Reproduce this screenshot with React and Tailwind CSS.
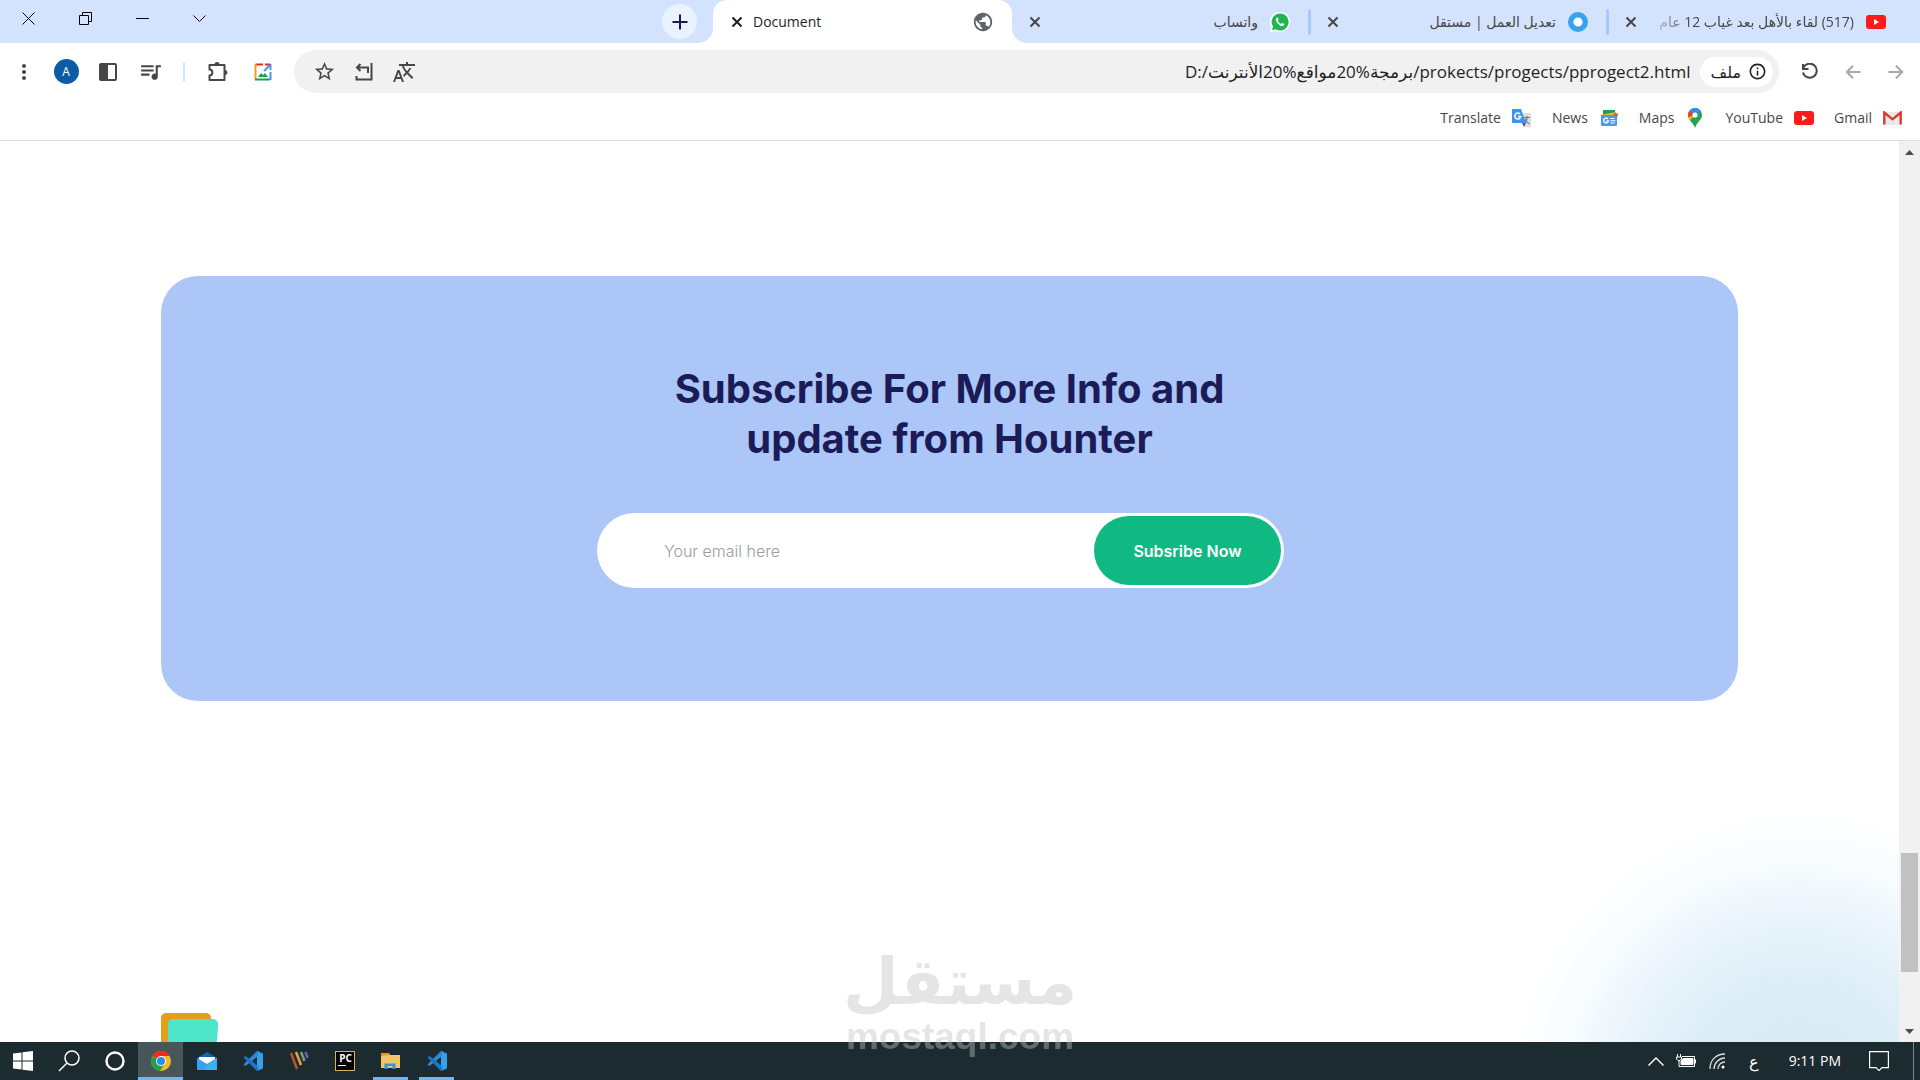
import React from 'react';
import { MdQueueMusic, MdStarOutline, MdTranslate, MdPublic, MdInfoOutline } from 'react-icons/md';

/* ---------- icons ---------- */

const CloseIcon = () => (
    <svg width="12" height="12" viewBox="0 0 12 12" stroke="currentColor" strokeWidth="2">
        <path d="M1.5 1.5l9 9M10.5 1.5l-9 9" />
    </svg>
);

const YoutubeIcon = () => (
    <svg width="20" height="14" viewBox="0 0 20 14">
        <rect width="20" height="14" rx="3" fill="#ff1a1a" />
        <path d="M8 4l5 3-5 3z" fill="#fff" />
    </svg>
);

const WhatsappIcon = () => (
    <svg width="20" height="20" viewBox="0 0 20 20">
        <path d="M10 0a10 10 0 1 1-4.600 18.900L0 20l1.200-5A10 10 0 0 1 10 0z" fill="#fff" />
        <path d="M10 1.500a8.500 8.500 0 1 1-4.300 15.800L2 18.200l1-3.600A8.500 8.500 0 0 1 10 1.500z" fill="#20b551" />
        <path d="M7 5.500c-1.700 1-1.500 3.300.7 5.900 2.300 2.500 4.800 3.500 6.300 1.800.4-.6.300-1.100-.2-1.400l-1.500-.8c-.5-.2-.9.900-1.500.8-1-.3-2.500-1.800-2.800-2.800-.1-.5.800-.9.600-1.500L7.900 5.800c-.2-.4-.5-.5-.9-.3z" fill="#fff" />
    </svg>
);

const RingIcon = () => (
    <svg width="20" height="20" viewBox="0 0 20 20">
        <circle cx="10" cy="10" r="7.300" fill="#fff" stroke="#36a3f0" strokeWidth="5.400" />
    </svg>
);

const PuzzleIcon = () => (
    <svg width="22" height="22" viewBox="0 0 22 22" fill="none" stroke="#474747" strokeWidth="2" strokeLinejoin="round">
        <path d="M2.500 4h15v15h-15v-4.500c3.800 0 3.800-6 0-6z" />
        <path d="M7.500 3.500a2.500 2.500 0 0 1 5 0zM18 9a2.500 2.500 0 0 1 0 5z" fill="#474747" stroke="none" />
    </svg>
);

const LensIcon = () => (
    <svg width="18" height="18" viewBox="0 0 18 18" fill="none" strokeWidth="2">
        <path d="M9 1.500H1.500" stroke="#ea2a1f" />
        <path d="M1.500 1v15" stroke="#f0a11a" />
        <path d="M1 16.500h15" stroke="#17a34a" />
        <path d="M16.500 17V9" stroke="#4a90f5" />
        <path d="M10 8l6-6" stroke="#4a90f5" />
        <path d="M11 1.500h5" stroke="#ea2a1f" />
        <path d="M16.500 1v6" stroke="#4a90f5" />
        <path d="M4 14l3-4 2 2 2-2 3 4z" fill="#17a34a" />
    </svg>
);

const InstallIcon = () => (
    <svg width="18" height="18" viewBox="0 0 18 18" fill="none" stroke="#474747" strokeWidth="2">
        <path d="M16.500 0v16.500h-15V13" />
        <path d="M13 10V4.500H2M5.500 1L2 4.500 5.500 8" />
    </svg>
);

const ReloadIcon = () => (
    <svg width="18" height="18" viewBox="0 0 18 18" fill="none" stroke="#474747" strokeWidth="2">
        <path d="M2.500 4.500A7 7 0 1 1 2 9.500" />
        <path d="M2 1v5h5.500" />
    </svg>
);

const ArrowIcon = ({ back }) => (
    <svg width="16" height="14" viewBox="0 0 16 14" fill="none" stroke="#a8a8a8" strokeWidth="2">
        {back ? <path d="M15.500 7H2M8 .8L1.800 7 8 13.200" /> : <path d="M.5 7H14M8 .8L14.200 7 8 13.200" />}
    </svg>
);

const GmailIcon = () => (
    <svg width="19" height="14" viewBox="0 0 19 14">
        <path d="M1 1h17v13H1z" fill="#e9e9e9" />
        <path d="M1.300 13.500V1.500l8.200 6.800 8.200-6.800v12" fill="none" stroke="#dc3b2c" strokeWidth="2.400" />
    </svg>
);

const MapsIcon = () => (
    <svg width="20" height="20" viewBox="0 0 20 20">
        <path d="M10 0a7 7 0 0 1 7 7c0 5-5 6.500-7 13-1.500-5-7-8-7-13a7 7 0 0 1 7-7z" fill="#22a454" />
        <path d="M3 7a7 7 0 0 1 1.700-4.500L10 7l-5.300 5.500C3.800 11 3 9 3 7z" fill="#f9bb0e" />
        <path d="M4.500 2.700A7 7 0 0 0 3 7c0 .8.200 1.600.500 2.300L10 7z" fill="#e8402f" />
        <path d="M4.500 2.700A7 7 0 0 1 16 3.500L10 7z" fill="#3b86f0" />
        <circle cx="10" cy="7" r="2.600" fill="#fff" />
    </svg>
);

const NewsIcon = () => (
    <svg width="20" height="18" viewBox="0 0 20 18">
        <path d="M4 1h12v5H4z" fill="#1fa053" />
        <path d="M1 6l16-3 2 4H2z" fill="#f6b21a" />
        <path d="M15 4l4 1-1 4h-3z" fill="#e5482d" />
        <rect x="2" y="6" width="16" height="11" rx="1" fill="#4a9af0" />
        <path d="M9 10a2.400 2.400 0 1 0 .4 2H7.500" fill="none" stroke="#fff" strokeWidth="1.300" />
        <path d="M11.500 9.500h4M11.500 11.800h5M11.500 14h4" stroke="#fff" strokeWidth="1" />
    </svg>
);

const TranslateIcon = () => (
    <svg width="20" height="20" viewBox="0 0 20 20">
        <path d="M8 5h11v14h-7z" fill="#dedede" />
        <path d="M12 9.500h6M15 8v1.500c0 3-1.500 5-3 6M13 11c1 2.500 2.500 4 4.500 5" fill="none" stroke="#6c7a83" strokeWidth="1.200" />
        <path d="M0 1h9l5 14H1a1 1 0 0 1-1-1z" fill="#3e95ef" />
        <path d="M10 15h4l-2 4z" fill="#2a62c0" />
        <path d="M8 6a3 3 0 1 0 .8 2.400H6" fill="none" stroke="#fff" strokeWidth="1.500" />
    </svg>
);

const ChromeIcon = () => (
    <svg width="20" height="20" viewBox="0 0 20 20">
        <circle cx="10" cy="10" r="10" fill="#f6b926" />
        <path d="M10 10L1.340 5A10 10 0 0 0 9 20l5-8z" fill="#20a14c" />
        <path d="M10 10L1.340 5A10 10 0 0 1 18.660 5H10z" fill="#ee2b22" />
        <circle cx="10" cy="10" r="5" fill="#fff" />
        <circle cx="10" cy="10" r="4" fill="#2d8be8" />
    </svg>
);

const MailIcon = () => (
    <svg width="20" height="20" viewBox="0 0 20 20">
        <path d="M0 7l10-6 10 6v2H0z" fill="#1162b0" />
        <path d="M2 6h16v8H2z" fill="#fff" />
        <path d="M0 7l10 6 10-6v12H0z" fill="#36a2ee" />
        <path d="M10 13l10-6v12H8z" fill="#3fb0e8" />
    </svg>
);

const CodeIcon = () => (
    <svg width="20" height="20" viewBox="0 0 20 20">
        <path d="M14 0l6 2.500v15L14 20z" fill="#36a0ea" />
        <path d="M14.500 5.500L2.500 15 .5 13.500 14 0h1.500z" fill="#2b8bd8" />
        <path d="M14.500 14.500L2.500 5 .5 6.500 14 20h1.500z" fill="#1d78c4" />
    </svg>
);

const StrokesIcon = () => (
    <svg width="20" height="20" viewBox="0 0 20 20" fill="none" strokeWidth="2.600">
        <path d="M2 2l6 16" stroke="#b4552d" />
        <path d="M7 1l5 13" stroke="#e5a03c" />
        <path d="M12 1l3.500 9" stroke="#6f9c95" />
        <path d="M16.500 1l2 6" stroke="#5a67a8" />
    </svg>
);

const PycharmIcon = () => (
    <span className="flex h-5 w-5 flex-col border border-[#d9b25a] bg-black pl-[2px] font-['Open_Sans',sans-serif] text-[10px] leading-[13px] font-bold text-white">
        PC
        <span className="h-px w-2 bg-white" />
    </span>
);

const FolderIcon = () => (
    <svg width="19" height="18" viewBox="0 0 19 18">
        <path d="M0 1h8l2 3H0z" fill="#e59a1c" />
        <path d="M0 4l9-1h10v13H0z" fill="#f0c766" />
        <path d="M3.500 17v-5.500h11V17h-3v-3h-5v3z" fill="#3496e0" />
    </svg>
);

const WindowsIcon = () => (
    <svg width="20" height="20" viewBox="0 0 20 20" fill="#fff">
        <path d="M0 2.600L8.500 1.400V9.500H0zM9.500 1.200L20 0v9.500H9.500zM0 10.500h8.500v8.100L0 17.400zM9.500 10.500H20V20L9.500 18.800z" />
    </svg>
);

const SearchIcon = () => (
    <svg width="22" height="22" viewBox="0 0 22 22" fill="none" stroke="#fff" strokeWidth="1.500">
        <circle cx="14" cy="8" r="7" />
        <path d="M9 13l-8 8" />
    </svg>
);

const CortanaIcon = () => (
    <svg width="20" height="20" viewBox="0 0 20 20">
        <circle cx="10" cy="10" r="8.500" fill="none" stroke="#fff" strokeWidth="2.400" />
    </svg>
);

/* ---------- browser chrome ---------- */

const tabs = [
    { title: 'واتساب', icon: <WhatsappIcon /> },
    { title: 'تعديل العمل | مستقل', icon: <RingIcon />, divider: true },
    { title: '(517) لقاء بالأهل بعد غياب 12 عام', icon: <YoutubeIcon />, divider: true, fade: true },
];

const windowButtons = [
    { label: 'Close', path: 'M.5 .5l12 12M12.500 .5l-12 12' },
    { label: 'Restore', path: 'M.5 3.500h9v9h-9zM3.500 3V.5h9v9H10' },
    { label: 'Minimize', path: 'M0 6.500h13' },
    { label: 'Search tabs', path: 'M.5 3.500l6 6 6-6' },
];

const TabStrip = () => (
    <div className="flex h-[43px] shrink-0 bg-[#d3e2fd]">
        {windowButtons.map(b => (
            <button key={b.label} aria-label={b.label} className="flex h-[37px] w-[57px] items-center justify-center">
                <svg width="13" height="13" viewBox="0 0 13 13" fill="none" stroke="#000"><path d={b.path} /></svg>
            </button>
        ))}
        <button aria-label="New tab" className="mt-1 mr-4 ml-auto flex h-[35px] w-[35px] items-center justify-center rounded-full bg-[#e9f2fd]">
            <svg width="16" height="16" viewBox="0 0 16 16" stroke="#1b1b50" strokeWidth="2"><path d="M8 .5v15M.5 8h15" /></svg>
        </button>

        <div className="relative flex w-[299px] items-center rounded-t-[14px] bg-white pr-[18px] pl-[18px] text-[#1f1f1f]">
            <svg className="absolute bottom-0 -left-[15px]" width="15" height="15" viewBox="0 0 15 15"><path d="M15 0A15 15 0 0 1 0 15h15z" fill="#fff" /></svg>
            <svg className="absolute -right-[15px] bottom-0" width="15" height="15" viewBox="0 0 15 15"><path d="M0 0a15 15 0 0 0 15 15H0z" fill="#fff" /></svg>
            <button aria-label="Close tab"><CloseIcon /></button>
            <span className="ml-[10px] flex-1 text-sm">Document</span>
            <MdPublic size={22} color="#5f6368" />
        </div>

        {tabs.map(tab => (
            <div key={tab.title} className="relative flex w-[298px] items-center gap-3 pr-5 pl-[17px] text-[#474747]">
                {tab.divider && <span className="absolute top-[9px] -left-[2px] h-[26px] w-[3px] rounded-full bg-[#a8c7fa]" />}
                <button aria-label="Close tab"><CloseIcon /></button>
                <span
                    dir="rtl"
                    className={tab.fade
                        ? 'min-w-0 flex-1 overflow-hidden text-sm whitespace-nowrap [mask-image:linear-gradient(to_right,transparent,black_40px)]'
                        : 'min-w-0 flex-1 overflow-hidden text-sm whitespace-nowrap'}
                >
                    {tab.title}
                </span>
                {tab.icon}
            </div>
        ))}
        <div className="w-[14px]" />
    </div>
);

const IconButton = ({ label, children }) => (
    <button aria-label={label} className="flex h-9 w-9 shrink-0 items-center justify-center">{children}</button>
);

const Toolbar = () => (
    <div className="flex h-[57px] shrink-0 items-center bg-white pr-[6px] pl-[6px]">
        <div className="flex gap-[6px]">
            <IconButton label="Menu">
                <svg width="4" height="16" viewBox="0 0 4 16" fill="#474747"><circle cx="2" cy="2" r="2" /><circle cx="2" cy="8" r="2" /><circle cx="2" cy="14" r="2" /></svg>
            </IconButton>
            <IconButton label="Profile">
                <span className="flex h-[25px] w-[25px] items-center justify-center rounded-full bg-[#0c5ca5] text-xs text-white">A</span>
            </IconButton>
            <IconButton label="Side panel">
                <svg width="18" height="18" viewBox="0 0 18 18"><rect x="1" y="1" width="16" height="16" rx="1" fill="#fff" stroke="#474747" strokeWidth="2" /><path d="M1 1h8v16H1z" fill="#474747" /></svg>
            </IconButton>
            <IconButton label="Media controls"><MdQueueMusic size={25} color="#474747" /></IconButton>
        </div>
        <div className="mr-[15px] ml-[15px] h-5 w-[2px] bg-[#d3e2fd]" />
        <div className="flex gap-[9px]">
            <IconButton label="Extensions"><PuzzleIcon /></IconButton>
            <IconButton label="Search with Lens"><LensIcon /></IconButton>
        </div>

        <div className="mx-[13px] flex h-[43px] flex-1 items-center rounded-full bg-[#f1f1f1] pr-[6px] pl-3">
            <div className="flex gap-1">
                <IconButton label="Bookmark"><MdStarOutline size={23} color="#474747" /></IconButton>
                <IconButton label="Install"><InstallIcon /></IconButton>
                <IconButton label="Translate"><MdTranslate size={24} color="#474747" className="-scale-x-100" /></IconButton>
            </div>
            <input
                aria-label="Address"
                dir="ltr"
                className="min-w-0 flex-1 bg-transparent pr-[9px] text-right text-[17px] text-[#1f1f1f] outline-none"
                defaultValue="D:/برمجة%20مواقع%20الأنترنت/prokects/progects/pprogect2.html"
            />
            <button className="flex h-[30px] items-center gap-[7px] rounded-full bg-white pr-[6px] pl-[11px] text-base text-[#1f1f1f]">
                ملف
                <MdInfoOutline size={19} />
            </button>
        </div>

        <div className="flex gap-[7px]">
            <IconButton label="Reload"><ReloadIcon /></IconButton>
            <IconButton label="Back"><ArrowIcon back /></IconButton>
            <IconButton label="Forward"><ArrowIcon /></IconButton>
        </div>
    </div>
);

const bookmarks = [
    { name: 'Translate', icon: <TranslateIcon /> },
    { name: 'News', icon: <NewsIcon /> },
    { name: 'Maps', icon: <MapsIcon /> },
    { name: 'YouTube', icon: <YoutubeIcon /> },
    { name: 'Gmail', icon: <GmailIcon /> },
];

const BookmarkBar = () => (
    <nav className="flex h-[41px] shrink-0 items-center justify-end gap-5 border-b border-[#dedede] bg-white pr-[18px] pb-1 text-sm text-[#474747]">
        {bookmarks.map(b => (
            <a key={b.name} href="#" className="flex items-center gap-[11px]">{b.name}{b.icon}</a>
        ))}
    </nav>
);

/* ---------- page ---------- */

const Scrollbar = () => (
    <div className="flex w-[21px] shrink-0 flex-col items-center bg-[#f1f1f1]">
        <svg className="my-[9px]" width="9" height="5" viewBox="0 0 9 5" fill="#474f54"><path d="M0 5l4.500-5L9 5z" /></svg>
        <div className="flex-[691]" />
        <div className="h-[119px] w-[17px] bg-[#c1c1c1]" />
        <div className="flex-[49]" />
        <svg className="my-[8px]" width="9" height="5" viewBox="0 0 9 5" fill="#474f54"><path d="M0 0l4.500 5L9 0z" /></svg>
    </div>
);

const Subscribe = () => (
    <section className="flex flex-col items-center rounded-[37px] bg-[#acc6f8] pt-[88px] pb-[113px] font-[Inter,sans-serif]">
        <h1 className="text-center text-[40px] leading-[50px] font-bold text-[#1b1c57]">
            Subscribe For More Info and<br />update from Hounter
        </h1>
        <form className="mt-[49px] mr-[18px] flex h-[75px] w-full max-w-[687px] rounded-full bg-white p-[3px]" onSubmit={e => e.preventDefault()}>
            <input
                type="email"
                aria-label="Email"
                placeholder="Your email here"
                className="min-w-0 flex-1 bg-transparent pl-16 text-base font-light outline-none placeholder:text-[#9a9ca3]"
            />
            <button className="w-[187px] rounded-full bg-[#10b981] text-base font-semibold text-white">Subsribe Now</button>
        </form>
    </section>
);

const Page = () => (
    <div className="flex min-h-0 flex-1">
        <main className="min-w-0 flex-1 overflow-hidden bg-white bg-[radial-gradient(circle_290px_at_right_100px_bottom_-58px,#d9ecf5_0%,#dcedf6_40%,#e6f2fa_58%,#f6fbfe_80%,#ffffff_100%)] pt-[135px]">
            <div className="mx-auto flex max-w-[1577px] flex-col gap-[312px]">
                <Subscribe />
                <svg width="57" height="60" viewBox="0 0 57 60">
                    <rect width="50" height="60" rx="5" fill="#e59e19" />
                    <path d="M12 6h40a5 5 0 0 1 5 5c0 16-3 30-10 49H7V11a5 5 0 0 1 5-5z" fill="#4de6cb" />
                </svg>
            </div>
        </main>
        <Scrollbar />
    </div>
);

/* ---------- taskbar ---------- */

const apps = [
    { name: 'Start', icon: <WindowsIcon /> },
    { name: 'Search', icon: <SearchIcon /> },
    { name: 'Cortana', icon: <CortanaIcon /> },
    { name: 'Chrome', icon: <ChromeIcon />, active: true },
    { name: 'Mail', icon: <MailIcon /> },
    { name: 'Code', icon: <CodeIcon /> },
    { name: 'Strokes', icon: <StrokesIcon /> },
    { name: 'PyCharm', icon: <PycharmIcon /> },
    { name: 'Files', icon: <FolderIcon />, running: true },
    { name: 'Code window', icon: <CodeIcon />, running: true },
];

const appClass = (app) => {
    if (app.active) return 'relative flex w-[45px] items-center justify-center bg-[#48555a]';
    return 'relative flex w-[45px] items-center justify-center';
};

const Taskbar = () => (
    <footer className="flex h-[38px] shrink-0 justify-between bg-[#1b2b30] text-white">
        <div className="flex gap-px">
            {apps.map(app => (
                <button key={app.name} aria-label={app.name} className={appClass(app)}>
                    {app.icon}
                    {app.active && <span className="absolute inset-x-0 bottom-0 h-[3px] bg-[#76b5ec]" />}
                    {app.running && <span className="absolute inset-x-[5px] bottom-0 h-[3px] bg-[#76b5ec]" />}
                </button>
            ))}
        </div>
        <div className="flex items-center">
            <svg width="16" height="9" viewBox="0 0 16 9" fill="none" stroke="#fff" strokeWidth="1.400"><path d="M.5 8.500L8 1l7.500 7.500" /></svg>
            <svg className="ml-3" width="20" height="14" viewBox="0 0 20 14" fill="none" stroke="#fff">
                <path d="M6 2.500h12.500v10H3V7M19.500 5.500v4M1.500 0v3M4.500 0v3M.5 3h5v2L4 6.500H2L.5 5z" />
                <path d="M7 4.500h10v6H5V7z" fill="#fff" />
            </svg>
            <svg className="ml-[13px]" width="16" height="16" viewBox="0 0 16 16" fill="none" stroke="#d8dcdd" strokeWidth="1.300">
                <path d="M1 16C1 7 7 1 16 1M5 16c0-6 5-11 11-11M9 16c0-4 3-7 7-7" />
                <circle cx="14" cy="14" r="1.500" fill="#fff" stroke="none" />
            </svg>
            <span className="ml-6 text-base">ع</span>
            <time className="ml-[30px] text-sm">9:11 PM</time>
            <svg className="ml-7" width="20" height="20" viewBox="0 0 20 20" fill="none" stroke="#fff" strokeWidth="1.200"><path d="M.6 .6h18.800v16h-6.400l-3 3-3-3H.6z" /></svg>
            <span className="mr-[6px] ml-6 h-full w-px bg-[#7c878a]" />
        </div>
    </footer>
);

const Watermark = () => (
    <div className="pointer-events-none absolute inset-x-0 bottom-[21px] flex flex-col items-center text-[#c3c3c3] opacity-42">
        <span dir="rtl" className="font-['DejaVu_Sans',sans-serif] text-[64px] leading-[66px] font-bold">مستقل</span>
        <span className="font-['Liberation_Sans',sans-serif] text-[37px] leading-[44px] font-bold">mostaql.com</span>
    </div>
);

const App = () => (
    <div className="relative flex h-screen flex-col overflow-hidden font-['Open_Sans','DejaVu_Sans',sans-serif]">
        <TabStrip />
        <Toolbar />
        <BookmarkBar />
        <Page />
        <Taskbar />
        <Watermark />
    </div>
);

export default App;
